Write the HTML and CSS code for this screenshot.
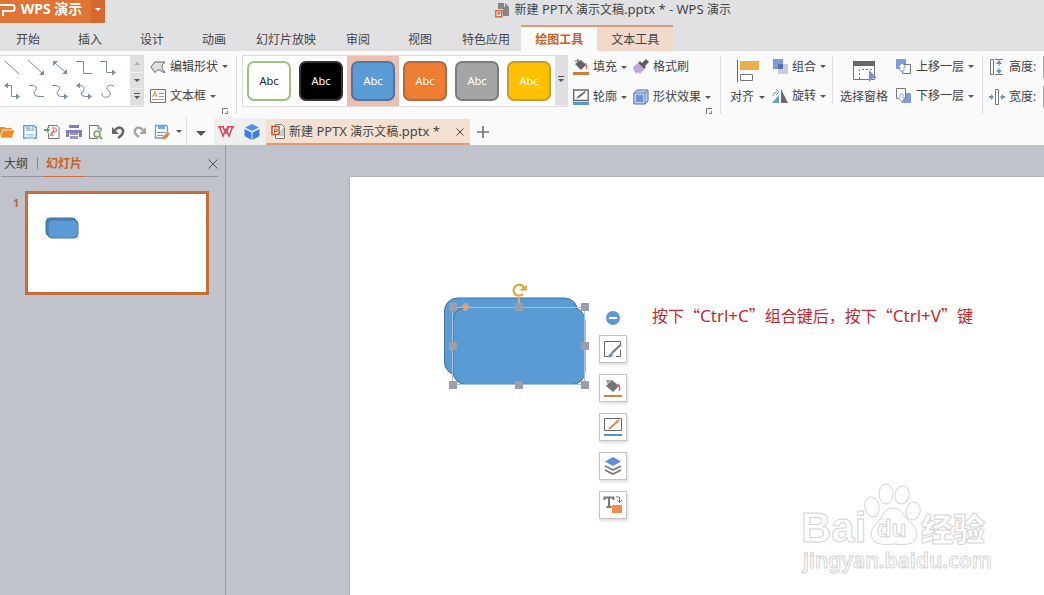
FILE: index.html
```html
<!DOCTYPE html>
<html lang="zh-CN">
<head>
<meta charset="utf-8">
<title>新建 PPTX 演示文稿.pptx * - WPS 演示</title>
<link rel="stylesheet" href="styles.css">
</head>
<body>
<div class="app">
  <header class="titlebar">
    <button class="brand" type="button">
      <svg width="16" height="16" viewBox="0 0 16 16"><path d="M0 3h12.500q2 0 2 2v2q0 2-2 2H3V14" fill="none" stroke="#fff" stroke-width="2"/></svg>
      <span class="brand-name">WPS 演示</span>
      <span class="brand-more"><i class="caret"></i></span>
    </button>
    <div class="window-title">
      <svg width="15" height="16" viewBox="0 0 15 16"><path d="M3 1h6v4h5v9H8V7H3z" fill="#858585"/><path d="M10 1l4 4h-4z" fill="#858585"/><rect x=".8" y="8.800" width="6" height="6" fill="#fff" stroke="#cd6b3a" stroke-width="1.500"/><path d="M3 13.500v-3h2v1.600H3" fill="none" stroke="#cd6b3a"/></svg>
      <span>新建<span class="latin"> PPTX </span>演示文稿<span class="latin">.pptx * - WPS </span>演示</span>
    </div>
  </header>

  <nav class="tabs">
    <button class="tab first" type="button">开始</button>
    <button class="tab" type="button">插入</button>
    <button class="tab" type="button">设计</button>
    <button class="tab" type="button">动画</button>
    <button class="tab long" type="button">幻灯片放映</button>
    <button class="tab" type="button">审阅</button>
    <button class="tab" type="button">视图</button>
    <button class="tab long" type="button">特色应用</button>
    <button class="tab tool active" type="button">绘图工具</button>
    <button class="tab tool tinted" type="button">文本工具</button>
  </nav>

  <section class="ribbon">
    <div class="gallery">
      <div class="connectors">
        <button type="button" aria-label="直线"><svg class="line" viewBox="0 0 16 16"><path d="M1 2l14 13"/></svg></button>
        <button type="button" aria-label="箭头"><svg class="line" viewBox="0 0 16 16"><path d="M0 1l14 13"/><path class="head" d="M16 16v-5l-5 5z"/></svg></button>
        <button type="button" aria-label="双箭头"><svg class="line" viewBox="0 0 16 16"><path d="M3 4l10 9"/><path class="head" d="M1 2h5L1 7zM15 15v-5l-5 5z"/></svg></button>
        <button type="button" aria-label="肘形"><svg class="line" viewBox="0 0 16 16"><path d="M0 2.500h7.500v12H16"/></svg></button>
        <button type="button" aria-label="肘形箭头"><svg class="line" viewBox="0 0 16 16"><path d="M0 2.500h6.500v11H12"/><path class="head" d="M12 10.500v6l4-3z"/></svg></button>
        <button type="button" aria-label="肘形双箭头"><svg class="line" viewBox="0 0 16 16"><path d="M3 2.500h4.500v11H12"/><path class="head" d="M12 10.500v6l4-3zM4 -.5v6l-4-3z"/></svg></button>
        <button type="button" aria-label="曲线"><svg class="line" viewBox="0 0 16 16"><path d="M1 2.500h4q5 1 3 4t-2 3q0 4 4 4h6"/></svg></button>
        <button type="button" aria-label="曲线箭头"><svg class="line" viewBox="0 0 16 16"><path d="M0 2.500h4q5 1 3 4t-2 3q0 4 4 4h4"/><path class="head" d="M12 10.500v6l4-3z"/></svg></button>
        <button type="button" aria-label="曲线双箭头"><svg class="line" viewBox="0 0 16 16"><path d="M3 2.500q6 0 5 4t-3 3q0 4 4 4h4"/><path class="head" d="M12 10.500v6l4-3zM4-.5v6l-4-3z"/></svg></button>
        <button type="button" aria-label="自由曲线"><svg class="line" viewBox="0 0 16 16"><path d="M14 3.500Q12 1 8.500 2.500 5 6 9 8q3 3 0 5.500-5 2-7-1.500v-2"/></svg></button>
      </div>
      <div class="scroller">
        <button type="button" aria-label="上一行"><i class="caret up"></i></button>
        <button type="button" aria-label="下一行"><i class="caret"></i></button>
        <button type="button" aria-label="更多形状"><i class="caret more"></i></button>
      </div>
    </div>

    <div class="group edit-group">
      <button class="cmd" type="button"><svg width="16" height="16" viewBox="0 0 16 16"><path d="M5 3h10q-4 3-3 5.500 0 2 3 5-3 0-5-2.500-3-1-5 2.500L.8 8z" fill="#e1e1e3" stroke="#666"/></svg>编辑形状<i class="caret"></i></button>
      <button class="cmd" type="button"><svg width="16" height="16" viewBox="0 0 16 16"><path d="M.5 1.500h15v13H.5z" fill="#fff" stroke="#777"/><path d="M2.500 9L5 3.500 7 9M3.500 7h3" fill="none" stroke="#d98a57"/><path d="M9 5.500h5M9 8.500h5M2 11.500h12" stroke="#999"/></svg>文本框<i class="caret"></i></button>
      <svg class="launcher" viewBox="0 0 6 6"><path d="M.5 6V.5H6M3 5.500h2.500V3" fill="none" stroke="#777"/></svg>
    </div>
    <div class="rule"></div>

    <div class="gallery styles">
      <button class="swatch-cell" type="button"><span class="swatch outline">Abc</span></button>
      <button class="swatch-cell" type="button"><span class="swatch black">Abc</span></button>
      <button class="swatch-cell picked" type="button"><span class="swatch blue">Abc</span></button>
      <button class="swatch-cell" type="button"><span class="swatch orange">Abc</span></button>
      <button class="swatch-cell" type="button"><span class="swatch gray">Abc</span></button>
      <button class="swatch-cell" type="button"><span class="swatch yellow">Abc</span></button>
      <div class="scroller single"><button type="button" aria-label="更多样式"><i class="caret more"></i></button></div>
    </div>

    <div class="group paint-group">
      <button class="cmd" type="button"><svg width="16" height="16" viewBox="0 0 16 16"><path d="M2 5l6-4 5 5-5 5z" fill="#626262"/><path d="M5 4V0M2 2h4" stroke="#626262" fill="none"/><path d="M12 4q2 2 1.500 6" stroke="#d96d65" fill="none" stroke-width="1.500"/><path d="M0 13h16v3H0z" fill="#d47a3c"/></svg>填充<i class="caret"></i></button>
      <button class="cmd" type="button"><svg width="16" height="16" viewBox="0 0 16 16"><path d="M9 4l4-4 3 3-4 4 1 1-2 2-6-6 2-2z" fill="#5d5d62"/><path d="M5 4l6 6-4 5-2-2-1 2-2-2-1-1-1-4z" fill="#c3a5e0"/></svg>格式刷</button>
      <button class="cmd" type="button"><svg width="16" height="16" viewBox="0 0 16 16"><path d="M.7 1h14.500v10.500H.7z" fill="#fff" stroke="#666" stroke-width="1.300"/><path d="M3 10l2-3 7-5 1 1-6 5z" fill="#666"/><path d="M0 13h16v3H0z" fill="#5998c4"/></svg>轮廓<i class="caret"></i></button>
      <button class="cmd" type="button"><svg width="16" height="16" viewBox="0 0 16 16"><path d="M.8 4l3-3H15v11l-3 3H.8z" fill="#bccdf4" stroke="#596f9d"/><path d="M3 6h7v7H3z" fill="#6e91e4"/><path d="M1 4h11v11M12 4l3-3" fill="none" stroke="#6d82ad"/></svg>形状效果<i class="caret"></i></button>
      <svg class="launcher" viewBox="0 0 6 6"><path d="M.5 6V.5H6M3 5.500h2.500V3" fill="none" stroke="#777"/></svg>
    </div>
    <div class="rule"></div>

    <div class="group align-group">
      <button class="big" type="button"><svg width="24" height="24" viewBox="0 0 24 24"><path d="M1.500 1v22" stroke="#666"/><path d="M4 2h19v9H4z" fill="#e9b04f"/><path d="M4.500 15.500h12v6h-12z" fill="#fff" stroke="#777"/></svg><span>对齐<i class="caret"></i></span></button>
      <div class="stack">
        <button class="cmd" type="button"><svg width="16" height="16" viewBox="0 0 16 16"><path d="M6 5h10v10H6z" fill="#c9ccd4"/><path d="M1 0h10v10H1z" fill="#8199da"/><path d="M6 5h5v5H6z" fill="#5870ad"/></svg>组合<i class="caret"></i></button>
        <button class="cmd" type="button"><svg width="16" height="16" viewBox="0 0 16 16"><path d="M9 1v14h7z" fill="#6b6b6f"/><path d="M7 7v8H0z" fill="#6b9bc8"/><path d="M1 8q0-4 4-4M4 1l3 3-3 3" fill="none" stroke="#6b9bc8"/></svg>旋转<i class="caret"></i></button>
      </div>
    </div>
    <div class="rule short"></div>

    <div class="group arrange-group">
      <button class="big" type="button"><svg width="26" height="24" viewBox="0 0 26 24"><path d="M2.500 3h21v17.500h-21z" fill="#fff" stroke="#777"/><path d="M2 2h22v5H2z" fill="#666"/><path d="M8.500 20v-9.500H23" fill="none" stroke="#777" stroke-dasharray="2 2"/><path d="M18 11l8 8h-4l-4 4z" fill="#7593d2"/></svg><span>选择窗格</span></button>
      <div class="stack">
        <button class="cmd" type="button"><svg width="16" height="16" viewBox="0 0 16 16"><path d="M0 0h10v10H0z" fill="#8299df"/><path d="M6.500 5.500h8v9h-8z" fill="#fff" stroke="#777"/><path d="M6 4l4 4H8v4H4V8H2z" fill="#fff" stroke="#7088c8" stroke-width=".7"/></svg>上移一层<i class="caret"></i></button>
        <button class="cmd" type="button"><svg width="16" height="16" viewBox="0 0 16 16"><path d="M6 5h9v10H6z" fill="#8299df"/><path d="M.5.500h9v10h-9z" fill="#fff" stroke="#777"/><path d="M4 6h3v4h2l-3.500 4L2 10h2z" fill="#fff" stroke="#7088c8" stroke-width=".7"/></svg>下移一层<i class="caret"></i></button>
      </div>
    </div>
    <div class="rule"></div>

    <div class="group size-group">
      <div class="field"><label for="h"><svg width="16" height="16" viewBox="0 0 16 16"><path d="M1.500.500h3v15h-3z" fill="#fff" stroke="#777"/><path d="M6 .5h8M6 15.500h8" stroke="#777"/><path d="M10 1l3 4H7zM10 15l3-4H7z" fill="#6d94b5"/><path d="M10 4v8" stroke="#6d94b5" stroke-dasharray="3 2"/></svg>高度:</label><input id="h" type="text"></div>
      <div class="field"><label for="w"><svg width="16" height="16" viewBox="0 0 16 16"><path d="M6.500.500h3v15h-3z" fill="#fff" stroke="#777"/><path d="M0 8h3M13 8h3" stroke="#6d94b5" stroke-width="2"/><path d="M2 5v6l3-3zM14 5v6l-3-3z" fill="#6d94b5"/></svg>宽度:</label><input id="w" type="text"></div>
    </div>
  </section>

  <section class="quickbar">
    <div class="quick">
      <button type="button" aria-label="打开"><svg viewBox="0 0 16 16"><path d="M0 3h4l2 1h6v2H3l-3 7z" fill="#e39437"/><path d="M3 6h12l-3 8H0z" fill="#f08b26" stroke="#fff" stroke-width=".7"/></svg></button>
      <button type="button" aria-label="保存"><svg viewBox="0 0 16 16"><path d="M1.700 1.700H12l2.300 2v10.600H1.700z" fill="#fff" stroke="#719bd4" stroke-width="1.500"/><path d="M4 2h8v5H4zM4 10h8v5H4z" fill="#a8c4eb"/><path d="M9 2v4M4 12h8" stroke="#fff"/></svg></button>
      <button type="button" aria-label="输出为PDF"><svg viewBox="0 0 16 16"><path d="M4.500 4V1.500H13l2 2v11H4.500V9" fill="#fff" stroke="#777"/><path d="M6 12q4-3 4-7M8 4q6-1 4 4H8M8 8q-3 4 2 3" fill="none" stroke="#d35c61"/><path d="M0 5h3V3l3 3-3 3V7H0z" fill="#61a359"/></svg></button>
      <button type="button" aria-label="打印"><svg viewBox="0 0 16 16"><path d="M3 1h10v4H3zM0 6h16v7h-3V9H3v4H0z" fill="#8480b4"/><path d="M4 9h8v6H4z" fill="#9b97c4"/><path d="M3 4.500h10M4 11.500h8" stroke="#fff"/></svg></button>
      <button type="button" aria-label="打印预览"><svg viewBox="0 0 16 16"><path d="M10 14.500H1.500V1.500H10l3 3V8" fill="#fff" stroke="#777"/><path d="M10 1v4h4" fill="none" stroke="#777"/><circle cx="9" cy="10" r="3" fill="#e3f3df" stroke="#77a66b" stroke-width="1.500"/><path d="M11 12l3 3" stroke="#77a66b" stroke-width="2"/></svg></button>
      <button type="button" aria-label="撤销"><svg viewBox="0 0 16 16"><path d="M5 6q5-5 8 0 1 4-5 8" fill="none" stroke="#666" stroke-width="2.500"/><path d="M2 3v7h7z" fill="#666"/></svg></button>
      <button type="button" aria-label="恢复"><svg viewBox="0 0 16 16"><path d="M11 6Q6 1 3 6q-1 4 4 7" fill="none" stroke="#a5a5a8" stroke-width="2.500"/><path d="M14 3v7H7z" fill="#a5a5a8"/></svg></button>
      <button type="button" aria-label="编辑"><svg viewBox="0 0 16 16"><path d="M1.500 1.500h11l1 1v10l-3 1.500h-9z" fill="#fff" stroke="#719bd4" stroke-width="1.300"/><path d="M4 2h7v3H4z" fill="#7ea7e1"/><path d="M3 8.500h9M3 11.500h6" stroke="#719bd4"/><path d="M8 15l1-3 5-4 2 2-5 5z" fill="#dd8451"/></svg></button>
      <button class="drop" type="button" aria-label="更多编辑"><i class="caret"></i></button>
    </div>
    <button class="quick-more" type="button" aria-label="自定义"><i class="caret large"></i></button>
    <div class="homes">
      <button type="button" aria-label="WPS 首页"><svg viewBox="0 0 16 16"><path d="M0 2.800h6M9 2.800h7M1.500 3l3.500 9 3-7 3 7 3.500-9M5 3l3 7M10.500 3L8 9" fill="none" stroke="#dc4652" stroke-width="1.500"/></svg></button>
      <button type="button" aria-label="云文档"><svg viewBox="0 0 16 16"><path d="M8 0l7 3.500L8 7 1 3.500z" fill="#5791e2"/><path d="M.5 5L7.500 8.500V16l-7-4zM15.500 5l-7 3.500V16l7-4z" fill="#3f7fd9"/></svg></button>
    </div>
    <div class="doc-tab">
      <svg width="14" height="15" viewBox="0 0 14 15"><path d="M4.500.500h6l3 3v11h-9z" fill="#fff" stroke="#777"/><path d="M10 6v6M12 4v8" stroke="#999"/><path d="M1 2.500h7v8H1z" fill="#fff" stroke="#b9502e" stroke-width="1.500"/><path d="M3.500 9V5H6v2.500H3.500" fill="none" stroke="#b9502e"/></svg>
      <span>新建<span class="latin"> PPTX </span>演示文稿<span class="latin">.pptx *</span></span>
      <button type="button" aria-label="关闭文档"><svg viewBox="0 0 8 8"><path d="M.5.500l7 7M7.500.500l-7 7" stroke="#444"/></svg></button>
    </div>
    <button class="add" type="button" aria-label="新建文档"><svg width="12" height="12" viewBox="0 0 12 12"><path d="M6 0v12M0 6h12" stroke="#777" stroke-width="1.700"/></svg></button>
  </section>

  <main class="workspace">
    <aside class="outline-pane">
      <div class="pane-tabs">
        <button type="button">大纲</button>
        <span class="bar"></span>
        <button class="current" type="button">幻灯片</button>
        <button class="close" type="button" aria-label="关闭窗格"><svg width="10" height="10" viewBox="0 0 10 10"><path d="M.5.500l9 9M9.500.500l-9 9" stroke="#555"/></svg></button>
      </div>
      <div class="thumb-row">
        <span class="thumb-no">1</span>
        <button class="thumb" type="button" aria-label="幻灯片 1"><svg width="34" height="22" viewBox="0 0 34 22"><rect x="1" y="1" width="30" height="18" rx="4" fill="#5183b5" stroke="#41719c"/><rect x="3" y="3" width="30" height="18" rx="4" fill="#5b9bd5" stroke="#4378aa"/></svg></button>
      </div>
    </aside>

    <div class="stage">
      <div class="slide">
        <svg class="shapes" width="152" height="112" viewBox="0 0 152 112">
          <rect x="4.500" y="18" width="133" height="77" rx="13" fill="#5b9bd5" stroke="#41719c"/>
          <rect x="13" y="27.500" width="132" height="77" rx="13" fill="#5b9bd5" stroke="#41719c"/>
          <rect x="12.500" y="27.500" width="132" height="77" fill="none" stroke="#a9c1da"/>
          <path d="M79 27V17" stroke="#c8b27a" stroke-width="2"/>
          <path d="M83 14a5.500 5.500 0 1 1 1.500-4" fill="none" stroke="#dfa63c" stroke-width="2.200"/>
          <path d="M79 10.500h8V5z" fill="#dfa63c"/>
          <g fill="#9c9faa"><path d="M9 23h8v8H9zM75 23h8v8h-8zM141 23h8v8h-8zM9 62h8v8H9zM141 62h8v8h-8zM9 101h8v8H9zM75 101h8v8h-8zM141 101h8v8h-8z"/></g>
          <path d="M25.500 22.500l4.500 4.500-4.500 4.500-4.500-4.500z" fill="#dfa17f"/>
        </svg>
        <div class="float-tools">
          <button class="collapse" type="button" aria-label="收起"><svg width="14" height="14" viewBox="0 0 14 14"><circle cx="7" cy="7" r="7" fill="#5e97d4"/><path d="M3 7h8" stroke="#fff" stroke-width="2"/></svg></button>
          <button class="tool-btn" type="button" aria-label="形状样式"><svg viewBox="0 0 20 20"><path d="M7 17.500H1.500v-15h16V5M17.500 11v6.500H13" fill="none" stroke="#666"/><path d="M9 14l9-8.500" stroke="#777" stroke-width="2"/><path d="M5 18q1-4 4-4l1 1q-1 4-5 3z" fill="#5e8fce"/></svg></button>
          <button class="tool-btn" type="button" aria-label="形状填充"><svg viewBox="0 0 20 20"><path d="M3 8l6-6 7 6-6 6z" fill="#757579"/><path d="M5 6V2M3 3h5" stroke="#757579" fill="none"/><path d="M15 6q2 1 1.500 7" stroke="#d56569" fill="none" stroke-width="1.500"/><path d="M1 17h18v2H1z" fill="#cf8346"/></svg></button>
          <button class="tool-btn" type="button" aria-label="形状轮廓"><svg viewBox="0 0 20 20"><path d="M1.500 1.500h17v12h-17z" fill="none" stroke="#666"/><path d="M6 12l10-9" stroke="#d98941" stroke-width="2"/><path d="M1 17h18v2H1z" fill="#5794ca"/></svg></button>
          <button class="tool-btn" type="button" aria-label="叠放次序"><svg viewBox="0 0 20 20"><path d="M10 1l8 4.500-8 4.500-8-4.500z" fill="#5f8fd8"/><path d="M2 10l8 4 8-4M2 14l8 4 8-4" fill="none" stroke="#777" stroke-width="1.800"/></svg></button>
          <button class="tool-btn" type="button" aria-label="添加文字"><svg viewBox="0 0 20 20"><path d="M1.500 5V2.500h9V5M6 2v10M3.500 12h5" fill="none" stroke="#777" stroke-width="2"/><path d="M13 2h3.500v5M14 5l2.500 2.500L19 5" fill="none" stroke="#777"/><path d="M9 10h10v8H9z" fill="#ed8c4b"/></svg></button>
        </div>
        <p class="note">按下“<span>Ctrl+C</span>”组合键后，按下“<span>Ctrl+V</span>”键</p>
        <svg class="watermark" width="200" height="100" viewBox="0 0 200 100">
          <g fill="#fff" stroke="#d4d4d4">
            <text class="wm-bai" x="5" y="65">Bai</text>
            <ellipse cx="76" cy="30" rx="7" ry="10" transform="rotate(-12 76 30)"/><ellipse cx="90" cy="17" rx="7" ry="10"/><ellipse cx="106" cy="18" rx="7" ry="9" transform="rotate(12 106 18)"/><ellipse cx="117" cy="34" rx="7" ry="9" transform="rotate(14 117 34)"/>
            <path d="M96 31q9 0 13 9l9 9q6 9 0 15-4 5-20 3-15 2-20-3-6-7 0-15l7-8q4-10 11-10z"/>
            <text class="wm-du" x="81" y="60">du</text>
            <text class="wm-cn" x="125" y="64">经验</text>
            <text class="wm-url" x="7" y="91">jingyan.baidu.com</text>
          </g>
        </svg>
      </div>
    </div>
  </main>
</div>
</body>
</html>
```
FILE: styles.css
```css
* { box-sizing: border-box; }
body {
  margin: 0;
  font: 12px/18px "Noto Sans", "Noto Sans CJK SC", sans-serif;
  color: #444;
}
button {
  font: inherit;
  color: inherit;
  background: none;
  border: 0;
  padding: 0;
  margin: 0;
}
svg { display: block; flex: none; }
.app {
  display: flex;
  flex-direction: column;
  height: 100vh;
  overflow: hidden;
  background: #fafafa;
}
.latin { font-size: 13px; }

.caret {
  display: inline-block;
  flex: none;
  width: 0;
  height: 0;
  border: 3px solid transparent;
  border-top-color: #555;
  border-bottom: 0;
}
.caret.up { border-top: 0; border-bottom: 3px solid #aaa; }
.caret.large { border-width: 5px 5px 0; }
.caret.more { position: relative; }
.caret.more::before {
  content: "";
  position: absolute;
  left: -3px;
  top: -6px;
  width: 6px;
  height: 1px;
  background: #555;
}

.titlebar {
  display: flex;
  align-items: flex-start;
  justify-content: space-between;
  height: 25px;
  background: #e1e1e3;
}
.brand {
  display: flex;
  align-items: center;
  height: 23px;
  background: #e17335;
  color: #fff;
  font-weight: 700;
}
.brand svg { margin-bottom: 4px; }
.brand-name { width: 75px; padding: 0 4px 5px 0; font-size: 14px; text-align: center; white-space: nowrap; }
.brand-more {
  display: flex;
  align-items: center;
  justify-content: center;
  width: 14px;
  height: 100%;
  background: #d5692d;
  padding-bottom: 4px;
}
.brand-more .caret { border-top-color: #fff; }
.window-title {
  display: flex;
  align-items: center;
  gap: 5px;
  margin-right: 313px;
}

.tabs { display: flex; height: 26px; background: #e1e1e3; }
.tab { padding: 2px 19px 0; border-top: 2px solid transparent; white-space: nowrap; }
.tab.first { padding-left: 16px; }
.tab.long { padding-left: 11px; padding-right: 11px; }
.tab.tool { padding-left: 14px; padding-right: 14px; border-color: #e0987a; }
.tab.active { background: #fafafa; color: #c9602a; font-weight: 700; }
.tab.tinted { background: #f3d9cb; }

.ribbon {
  display: flex;
  align-items: flex-start;
  height: 67px;
  padding-top: 4px;
  white-space: nowrap;
}
.gallery {
  display: flex;
  flex: none;
  height: 52px;
  border: 1px solid #dcdcde;
  background: #fff;
}
.gallery:first-child { border-left: 0; }
.connectors {
  display: grid;
  grid-template-columns: repeat(5, 24px);
  grid-auto-rows: 24px;
  width: 130px;
  padding-left: 4px;
}
.line { width: 16px; height: 16px; overflow: visible; fill: none; stroke: #7c8da6; }
.line .head { fill: #7c8da6; stroke: none; }
.connectors button { padding-bottom: 3px; }
.scroller { display: flex; flex-direction: column; width: 13px; background: #dfdfe1; }
.scroller.single { width: 12px; }
.scroller button {
  display: flex;
  flex: 1;
  align-items: center;
  justify-content: center;
  border-bottom: 1px solid #f2f2f3;
}
.group { position: relative; display: flex; flex: none; height: 60px; padding-top: 1px; }
.cmd, .field { display: flex; align-items: center; gap: 4px; height: 22px; margin-bottom: 8px; }
.stack { display: flex; flex-direction: column; }
.launcher { position: absolute; right: 8px; bottom: 1px; width: 6px; height: 6px; }
.rule { flex: none; width: 1px; height: 59px; background: #dcdcde; }
.rule.short { height: 50px; }

.edit-group { flex-direction: column; width: 92px; padding-left: 6px; }
.styles { margin-left: 5px; }
.swatch-cell { width: 52px; height: 50px; padding: 0 4px; }
.swatch-cell.picked { background: #edbdad; }
.swatch {
  display: flex;
  align-items: center;
  justify-content: center;
  width: 44px;
  height: 40px;
  border: 2px solid;
  border-radius: 7px;
  color: #fff;
  font-size: 11px;
}
.outline { color: #222; background: #fff; border-color: #9cc180; }
.black { background: #000; border-color: #333; }
.blue { background: #5b9bd5; border-color: #4878a3; }
.orange { background: #ed7d31; border-color: #ae6b43; }
.gray { background: #a5a5a5; border-color: #7d7d7d; }
.yellow { background: #ffc000; border-color: #c69b30; }

.paint-group {
  display: grid;
  grid-template-columns: 60px 80px;
  grid-auto-rows: 30px;
  width: 152px;
  padding-left: 5px;
}
.big { display: flex; flex-direction: column; align-items: center; height: 50px; padding-top: 3px; gap: 5px; }
.big span { display: flex; align-items: center; gap: 5px; }
.align-group { width: 111px; padding-left: 9px; gap: 7px; }
.arrange-group { width: 149px; padding-left: 7px; gap: 8px; }
.size-group { flex-direction: column; padding-left: 6px; }
.field label { display: flex; align-items: center; gap: 4px; width: 50px; }
.field input { width: 60px; height: 22px; border: 1px solid #aaa; background: #fff; font: inherit; }

.quickbar { display: flex; align-items: stretch; height: 27px; }
.quick { display: flex; align-items: center; gap: 6px; width: 187px; border-right: 1px solid #dcdcde; }
.quick button svg, .homes svg { width: 16px; height: 16px; }
.quick .drop { display: flex; }
.quick-more { width: 27px; }
.homes { display: flex; align-items: center; gap: 10px; padding: 0 6px 0 4px; background: #efeff0; }
.doc-tab {
  display: flex;
  align-items: center;
  gap: 4px;
  width: 204px;
  margin-top: 1px;
  padding: 1px 6px 0 5px;
  background: #f3e0d0;
  border-bottom: 2px solid #dc9b7b;
  white-space: nowrap;
}
.doc-tab button { margin-left: auto; }
.doc-tab button svg { width: 8px; height: 8px; }
.add { padding: 0 7px; }

.workspace { display: flex; flex: 1; min-height: 0; background: #c0c3cc; }
.outline-pane { flex: none; width: 226px; border-right: 1px solid #989ba5; }
.pane-tabs {
  display: flex;
  align-items: center;
  height: 32px;
  margin: 0 7px 0 1px;
  padding: 5px 0 0 3px;
  border-bottom: 1px solid #92949d;
}
.pane-tabs button { height: 27px; padding-top: 1px; }
.bar { width: 1px; height: 12px; margin: 0 5px 0 9px; background: #85878f; }
.pane-tabs .current {
  padding: 2px 3px 0;
  color: #c9602a;
  font-weight: 700;
  border-bottom: 1px solid #d06c39;
}
.pane-tabs .close { margin-left: auto; }
.thumb-row { display: flex; padding: 14px 0 0 13px; }
.thumb-no { width: 12px; padding-top: 3px; color: #c9602a; font-weight: 700; font-size: 11px; }
.thumb {
  display: flex;
  align-items: flex-start;
  width: 184px;
  height: 104px;
  padding: 23px 17px;
  border: 3px solid #c66d38;
  background: #fff;
}

.stage { display: flex; flex: 1; padding: 32px 0 0 124px; }
.slide { position: relative; flex: 1; overflow: hidden; background: #fff; box-shadow: 0 0 2px #8d9099; }
.shapes { position: absolute; left: 90px; top: 103px; }
.float-tools {
  position: absolute;
  left: 249px;
  top: 134px;
  display: flex;
  flex-direction: column;
  align-items: center;
  gap: 11px;
}
.collapse { height: 14px; margin-bottom: -1px; }
.tool-btn {
  display: flex;
  align-items: center;
  justify-content: center;
  width: 28px;
  height: 28px;
  border: 1px solid #c4c4c6;
  background: #fff;
  box-shadow: 1px 2px 3px #ddd;
}
.tool-btn svg { width: 20px; height: 20px; }
.note {
  position: absolute;
  left: 302px;
  top: 126px;
  margin: 0;
  font: 16px/24px "Noto Sans CJK SC", sans-serif;
  color: #c3282d;
  white-space: nowrap;
}
.note span { font-family: "Noto Sans", sans-serif; font-size: 17px; }
.watermark { position: absolute; left: 446px; top: 300px; }
.wm-bai { font: 700 42px "Liberation Sans", sans-serif; }
.wm-du { font: 700 24px "Liberation Sans", sans-serif; }
.wm-cn { font: 900 32px "Noto Sans CJK SC", sans-serif; }
.wm-url { font: 600 21px "Noto Sans", sans-serif; }
```
